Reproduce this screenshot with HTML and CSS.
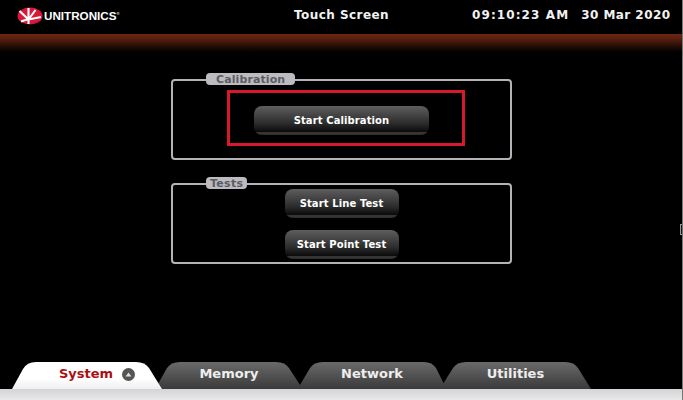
FILE: index.html
```html
<!DOCTYPE html>
<html lang="en">
<head>
  <meta charset="UTF-8">
  <meta name="viewport" content="width=device-width, initial-scale=1.0">
  <title>Touch Screen</title>
  <link rel="stylesheet" href="styles.css">
</head>
<body>
  <div class="screen">
    <header class="top-bar">
      <div class="logo">
        <svg class="logo-mark" width="26" height="18" viewBox="0 0 26 18">
          <ellipse cx="13" cy="9" rx="12.5" ry="8.5" fill="#d8173a"/>
          <path d="M2.5 4 L11.5 12.5 L11.5 17 M11.5 12.5 L11.5 1 M11.5 12.5 L18.5 3 M11.5 12.5 L24 10 M4 14.5 L11.5 12" fill="none" stroke="#fff" stroke-width="2.1"/>
        </svg>
        <span class="logo-text">UNITRONICS</span><span class="logo-reg">®</span>
      </div>
      <div class="title">Touch Screen</div>
      <div class="clock"><span class="clock-time">09:10:23 AM</span><span class="clock-date">30 Mar 2020</span></div>
    </header>
    <div class="band"></div>

    <main class="content">
      <section class="panel panel-calibration">
        <div class="panel-label">Calibration</div>
        <button type="button" class="btn btn-wide">Start Calibration</button>
        <div class="highlight"></div>
      </section>

      <section class="panel panel-tests">
        <div class="panel-label">Tests</div>
        <button type="button" class="btn">Start Line Test</button>
        <button type="button" class="btn">Start Point Test</button>
      </section>
    </main>

    <nav class="tabs">
      <div class="tab tab-active">
        <svg class="tab-shape" width="150" height="27" viewBox="0 0 150 27"><path d="M0 27 L11 7 Q15 0 24 0 L124 0 Q133 0 137 6 L150 27 Z" fill="url(#activeFill)"/><defs><linearGradient id="activeFill" x1="0" y1="0" x2="0" y2="1"><stop offset="0" stop-color="#fff"/><stop offset="0.6" stop-color="#fff"/><stop offset="1" stop-color="#f0eef0"/></linearGradient></defs></svg>
        <span class="tab-text">System</span>
        <span class="tab-arrow"><svg width="7" height="5" viewBox="0 0 7 5"><path d="M0.5 4.5 L3.5 0.5 L6.5 4.5 Z" fill="#ddd"/></svg></span>
      </div>
      <div class="tab tab-memory">
        <svg class="tab-shape" width="142" height="27" viewBox="0 0 142 27"><path d="M0 27 L0 22 L9 6 Q13 0 22 0 L118 0 Q127 0 131 6 L142 23 L142 27 Z" fill="url(#tabFill)"/><defs><linearGradient id="tabFill" x1="0" y1="0" x2="0" y2="1"><stop offset="0" stop-color="#6a6a6a"/><stop offset="1" stop-color="#3a3a3a"/></linearGradient></defs></svg>
        <span class="tab-text">Memory</span>
      </div>
      <div class="tab tab-network">
        <svg class="tab-shape" width="144" height="27" viewBox="0 0 144 27"><path d="M0 27 L0 23 L10 6 Q14 0 23 0 L124 0 Q132 0 136 6 L144 22 L144 27 Z" fill="url(#tabFill)"/></svg>
        <span class="tab-text">Network</span>
      </div>
      <div class="tab tab-utilities">
        <svg class="tab-shape" width="148" height="27" viewBox="0 0 148 27"><path d="M0 27 L0 22 L10 6 Q14 0 23 0 L122 0 Q131 0 135 6 L148 27 Z" fill="url(#tabFill)"/></svg>
        <span class="tab-text">Utilities</span>
      </div>
    </nav>
    <div class="bottom-band"></div>
    <div class="edge-handle"></div>
  </div>
</body>
</html>
```
FILE: styles.css
```css
html, body {
  margin: 0;
  padding: 0;
  background: #000;
}

.screen {
  position: relative;
  width: 683px;
  height: 400px;
  overflow: hidden;
  display: flex;
  flex-direction: column;
  background: #000;
  color: #fff;
  font-family: "DejaVu Sans", sans-serif;
  border-right: 1px solid #777;
  box-sizing: border-box;
}

.top-bar {
  height: 34px;
  display: flex;
  align-items: center;
  position: relative;
}

.logo {
  display: flex;
  align-items: center;
  margin-left: 17px;
  width: 277px;
  margin-top: -3px;
}

.logo-mark {
  flex: none;
}

.logo-text {
  margin-left: 1px;
  font-family: "Liberation Sans", sans-serif;
  font-weight: bold;
  font-size: 11px;
  transform: scaleX(1.06);
  transform-origin: left center;
  width: 72px;
}

.logo-reg {
  font-size: 4px;
  margin-top: -4px;
}

.title {
  width: 178px;
  font-size: 12px;
  font-weight: bold;
  letter-spacing: 0.45px;
  margin-top: -4px;
  color: #f2f2f2;
}

.clock {
  display: flex;
  gap: 12px;
  font-size: 12px;
  font-weight: bold;
  margin-top: -4px;
  color: #f2f2f2;
  white-space: nowrap;
}

.clock-time {
  letter-spacing: 1.1px;
}

.clock-date {
  letter-spacing: 0.45px;
}

.band {
  height: 18px;
  background: linear-gradient(#6e2712, #5a1f0e 25%, #1c0a04 75%, #000);
}

.content {
  flex: 1;
  padding: 27px 0 0 171px;
  display: flex;
  flex-direction: column;
  gap: 23px;
}

.panel {
  position: relative;
  width: 341px;
  height: 81px;
  box-sizing: border-box;
  border: 2px solid #b4b2b6;
  border-radius: 4px;
  display: flex;
  flex-direction: column;
  align-items: center;
}

.panel-label {
  position: absolute;
  left: 33px;
  top: -8px;
  padding: 0 10px;
  height: 12px;
  line-height: 13px;
  background: #bdbbc0;
  color: #5c5c64;
  border-radius: 4px;
  font-size: 11px;
  font-weight: bold;
  letter-spacing: 0.1px;
}

.panel-tests .panel-label {
  padding: 0 4px;
  letter-spacing: 0.3px;
}

.btn {
  display: block;
  width: 114px;
  height: 29px;
  padding: 0;
  border: none;
  border-radius: 8px;
  background: linear-gradient(#5e5e5e, #2c2c2c 60%, #0c0c0c 88%, #3c3c3c 92%, #2a2a2a);
  color: #fff;
  font-family: inherit;
  font-size: 10px;
  font-weight: bold;
  letter-spacing: 0.1px;
}

.btn-wide {
  width: 175px;
  margin-top: 25px;
}

.panel-tests .btn:first-of-type {
  margin-top: 4px;
}

.panel-tests .btn + .btn {
  margin-top: 12px;
}

.highlight {
  position: absolute;
  left: 54px;
  top: 9px;
  width: 238px;
  height: 56px;
  box-sizing: border-box;
  border: 3px solid #d8182c;
}

.tabs {
  position: absolute;
  left: 12px;
  top: 362px;
  display: flex;
  height: 27px;
}

.tab {
  position: relative;
  height: 27px;
  display: flex;
  align-items: center;
  justify-content: center;
  font-size: 13px;
  font-weight: bold;
  color: #eee;
}

.tab-shape {
  position: absolute;
  left: 0;
  top: 0;
}

.tab-text,
.tab-arrow {
  position: relative;
}

.tab-text {
  margin-top: -4px;
}

.tab-active {
  width: 150px;
  z-index: 1;
  color: #a80f14;
  justify-content: flex-start;
  padding-left: 47px;
  box-sizing: border-box;
}

.tab-arrow {
  width: 13px;
  height: 13px;
  margin: -3px 0 0 9px;
  border-radius: 50%;
  background: #555;
  display: flex;
  align-items: center;
  justify-content: center;
}

.tab-memory {
  width: 142px;
  margin-left: -4px;
}

.tab-network {
  width: 144px;
}

.tab-utilities {
  width: 148px;
  margin-left: -1px;
  padding-right: 3px;
  box-sizing: border-box;
}

.bottom-band {
  position: absolute;
  left: 0;
  right: 0;
  bottom: 0;
  height: 11px;
  background: linear-gradient(#d4d4d6, #e8e8ea);
}

.edge-handle {
  position: absolute;
  right: -1px;
  top: 224px;
  width: 3px;
  height: 11px;
  box-sizing: border-box;
  border: 1px solid #999;
  background: #111;
}
```
